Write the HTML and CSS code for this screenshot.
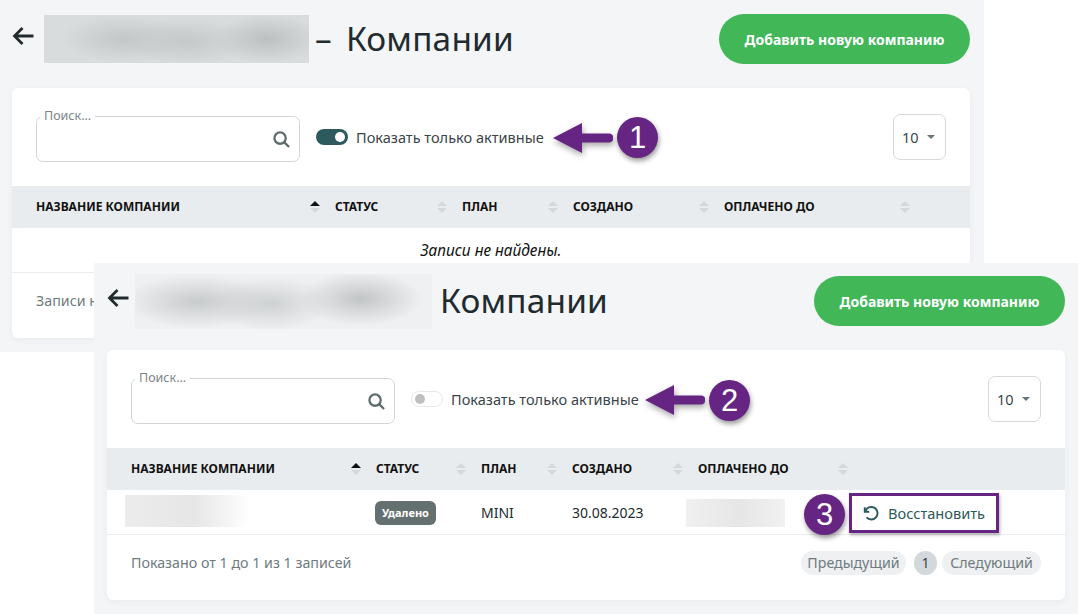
FILE: index.html
```html
<!DOCTYPE html>
<html lang="ru">
<head>
<meta charset="utf-8">
<title>Компании</title>
<link rel="stylesheet" href="styles.css">
</head>
<body>
<div class="canvas">
  <section class="window window-one">
    <header class="page-head">
      <svg class="back" viewBox="0 0 22 20"><path d="M21.500 10H2.500M10.500 2 2.500 10l8 8"/></svg>
      <div class="blur-name"></div>
      <h1 class="title"><span class="dash">–</span>Компании</h1>
      <button class="add">Добавить новую компанию</button>
    </header>
    <div class="card">
      <div class="controls">
        <div class="search">
          <span class="search-label">Поиск...</span>
          <svg class="search-icon" viewBox="0 0 18 18"><circle cx="7.500" cy="7.500" r="6"/><path d="m12 12 5 5"/></svg>
        </div>
        <span class="toggle on"></span>
        <span class="toggle-label">Показать только активные</span>
        <div class="size">10<span class="caret"></span></div>
      </div>
      <table class="grid">
        <colgroup><col class="c1"><col class="c2"><col class="c3"><col class="c4"><col class="c5"><col></colgroup>
        <thead>
          <tr>
            <th class="first"><div class="th"><span>Название компании</span><span class="sort active"></span></div></th>
            <th><div class="th"><span>Статус</span><span class="sort"></span></div></th>
            <th><div class="th"><span>План</span><span class="sort"></span></div></th>
            <th><div class="th"><span>Создано</span><span class="sort"></span></div></th>
            <th><div class="th"><span>Оплачено до</span><span class="sort"></span></div></th>
            <th></th>
          </tr>
        </thead>
        <tbody>
          <tr><td class="empty" colspan="6">Записи не найдены.</td></tr>
        </tbody>
      </table>
      <div class="foot"><span>Записи не найдены</span></div>
    </div>
  </section>

  <section class="window window-two">
    <header class="page-head">
      <svg class="back" viewBox="0 0 22 20"><path d="M21.500 10H2.500M10.500 2 2.500 10l8 8"/></svg>
      <div class="blur-name"></div>
      <h1 class="title">Компании</h1>
      <button class="add">Добавить новую компанию</button>
    </header>
    <div class="card">
      <div class="controls">
        <div class="search">
          <span class="search-label">Поиск...</span>
          <svg class="search-icon" viewBox="0 0 18 18"><circle cx="7.500" cy="7.500" r="6"/><path d="m12 12 5 5"/></svg>
        </div>
        <span class="toggle off"></span>
        <span class="toggle-label">Показать только активные</span>
        <div class="size">10<span class="caret"></span></div>
      </div>
      <table class="grid">
        <colgroup><col class="c1"><col class="c2"><col class="c3"><col class="c4"><col class="c5"><col></colgroup>
        <thead>
          <tr>
            <th class="first"><div class="th"><span>Название компании</span><span class="sort active"></span></div></th>
            <th><div class="th"><span>Статус</span><span class="sort"></span></div></th>
            <th><div class="th"><span>План</span><span class="sort"></span></div></th>
            <th><div class="th"><span>Создано</span><span class="sort"></span></div></th>
            <th><div class="th"><span>Оплачено до</span><span class="sort"></span></div></th>
            <th></th>
          </tr>
        </thead>
        <tbody>
          <tr>
            <td class="first"><div class="blur-company"></div></td>
            <td><span class="badge">Удалено</span></td>
            <td>MINI</td>
            <td>30.08.2023</td>
            <td class="paid"><div class="blur-date"></div></td>
            <td><span class="restore"><svg class="restore-icon" viewBox="0 0 18 18"><path d="M2 2.500v5h5"/><path d="M2.600 7.200A7 7 0 1 1 4 13.800"/></svg>Восстановить</span></td>
          </tr>
        </tbody>
      </table>
      <div class="foot">
        <span>Показано от 1 до 1 из 1 записей</span>
        <nav class="pager">
          <span class="pill prev">Предыдущий</span>
          <span class="pill current">1</span>
          <span class="pill next">Следующий</span>
        </nav>
      </div>
    </div>
  </section>

  <svg class="pointer pointer-one" viewBox="0 0 60 32"><path d="M0 16 29 1v10.500h27a4.500 4.500 0 0 1 0 9H29V31z"/></svg>
  <span class="marker marker-one">1</span>
  <svg class="pointer pointer-two" viewBox="0 0 60 32"><path d="M0 16 29 1v10.500h27a4.500 4.500 0 0 1 0 9H29V31z"/></svg>
  <span class="marker marker-two">2</span>
  <span class="marker marker-three">3</span>
  <div class="highlight"></div>
</div>
</body>
</html>
```
FILE: styles.css
```css
* { box-sizing: border-box; }
html, body { margin: 0; background: #fff; }
body { font-family: "Noto Sans", "Open Sans", sans-serif; font-size: 14px; color: #212b2f; }

.canvas { position: relative; width: 1078px; height: 614px; overflow: hidden; }

.window { position: absolute; width: 984px; background: #f4f5f7; }
.window-one { left: 0; top: 0; height: 352px; padding: 14px 14px 0 12px; }
.window-two { left: 94px; top: 263px; height: 351px; padding: 13px 13px 0 13px; }

.page-head { display: flex; align-items: center; height: 50px; margin-bottom: 24px; }
.back { width: 22px; height: 20px; margin-top: -6px; fill: none; stroke: #212b2f; stroke-width: 2.800; }
.blur-name { flex: none; }
.window-one .blur-name {
  width: 265px; height: 48px; margin-left: 10px;
  background:
    radial-gradient(ellipse 62px 24px at 30% 50%, #c3c7c7, transparent),
    radial-gradient(ellipse 60px 24px at 54% 55%, #c4c8c8, transparent),
    radial-gradient(ellipse 55px 24px at 84% 50%, #bcc0c0, transparent),
    #d9dcdd;
}
.window-two .blur-name {
  width: 297px; height: 55px; margin-left: 6px;
  background:
    radial-gradient(ellipse 75px 27px at 21% 50%, #c8cbcb, transparent),
    radial-gradient(ellipse 60px 27px at 46% 54%, #ced1d1, transparent),
    radial-gradient(ellipse 62px 27px at 76% 45%, #c2c5c5, transparent),
    #eff0f2;
}
.title { margin: 0; font-size: 33.400px; font-weight: 400; line-height: 1; white-space: nowrap; letter-spacing: .2px; }
.window-one .title { margin-left: 6px; }
.window-two .title { margin-left: 8px; }
.dash { margin-right: 14px; }
.add {
  width: 251px; height: 50px; margin-left: auto; border: 0; border-radius: 25px;
  background: #41b758; color: #fff; font: 700 14px "Noto Sans", sans-serif;
}

.card { width: 958px; height: 250px; background: #fff; border-radius: 6px; box-shadow: 0 2px 6px rgba(60, 70, 80, .06); overflow: hidden; }

.controls { display: flex; align-items: center; height: 98px; padding: 0 24px; }
.search { position: relative; width: 264px; height: 46px; margin-top: 4px; border: 1px solid #d0d5d7; border-radius: 7px; }
.search-label { position: absolute; left: 3px; top: -9px; padding: 0 4px; background: #fff; color: #7b8588; font-size: 12.500px; line-height: 16px; }
.search-icon { position: absolute; right: 9px; top: 14px; width: 17px; height: 17px; fill: none; stroke: #5d6c6c; stroke-width: 2.400; }
.toggle { position: relative; width: 32px; height: 16px; margin-left: 16px; border-radius: 8px; }
.toggle::after { content: ""; position: absolute; top: 3px; width: 10px; height: 10px; border-radius: 50%; }
.toggle.on { background: #2d5a5c; }
.toggle.on::after { right: 3px; background: #fff; }
.toggle.off { background: #fff; border: 1px solid #e6e8ea; }
.toggle.off::after { left: 3px; top: 2px; background: #bdbfc1; }
.toggle-label { margin-left: 8px; font-size: 14.550px; color: #3a4548; }
.size {
  display: flex; align-items: center; justify-content: space-between; width: 53px; height: 46px;
  margin-left: auto; padding: 0 10px 0 8px; border: 1px solid #d6dadc; border-radius: 7px; color: #3a4548; font-size: 14.500px;
}
.caret { width: 0; height: 0; border: 4px solid transparent; border-top: 4px solid #68757a; border-bottom: 0; }

.grid { width: 100%; border-collapse: collapse; table-layout: fixed; }
.window-one .c1 { width: 311px; }
.window-one .c2 { width: 127px; }
.window-one .c3 { width: 111px; }
.window-one .c4 { width: 151px; }
.window-one .c5 { width: 201px; }
.window-two .c1 { width: 257px; }
.window-two .c2 { width: 105px; }
.window-two .c3 { width: 91px; }
.window-two .c4 { width: 126px; }
.window-two .c5 { width: 165px; }
.grid th { height: 42px; padding: 0 3px 2px 12px; background: #e9ecee; }
.grid th.first { padding-left: 24px; }
.th { display: flex; align-items: center; justify-content: space-between; color: #111; font-size: 12px; font-weight: 700; text-transform: uppercase; white-space: nowrap; }
.sort { position: relative; width: 10px; height: 10px; top: 1px; }
.sort::before, .sort::after { content: ""; position: absolute; left: 0; border: 5px solid transparent; }
.sort::before { top: -1px; border-top: 0; border-bottom: 5px solid #d3d8da; }
.sort::after { top: 6px; border-bottom: 0; border-top: 5px solid #d3d8da; }
.sort.active::before { border-bottom-color: #111; }

.grid td { height: 44px; padding: 2px 12px 0; border-bottom: 1px solid #e9ecee; font-size: 14px; color: #212b2f; vertical-align: middle; }
.grid td.first { padding-left: 18px; }
.grid td.paid { padding-left: 0; }
.grid td.empty { text-align: center; font-style: italic; color: #111; padding-top: 2px; font-size: 15.400px; }
.blur-company { width: 125px; height: 32px; margin-top: -4px; background: linear-gradient(90deg, #ececec, #e6e6e6 55%, #fff); }
.blur-date { width: 99px; height: 28px; background: linear-gradient(90deg, #f0f0f0, #e7e6e6 55%, #f1f1f1); }
.badge { display: inline-block; height: 24px; margin-left: -1px; padding: 0 7px; border-radius: 6px; background: #646f6f; color: #fff; font-size: 11px; font-weight: 700; line-height: 24px; }
.restore { display: flex; align-items: center; gap: 9px; color: #2d5a5a; font-size: 14.600px; white-space: nowrap; }
.restore-icon { width: 16px; height: 16px; fill: none; stroke: #2d5a5a; stroke-width: 2.200; }

.foot { display: flex; align-items: center; justify-content: space-between; height: 65px; padding: 0 24px 9px; color: #6f7b80; font-size: 14.250px; }
.pager { display: flex; gap: 8px; }
.pill { height: 24px; border-radius: 12px; background: #eef0f1; color: #6f7b80; line-height: 24px; font-size: 14.200px; text-align: center; }
.pill.prev { width: 105px; }
.pill.next { width: 99px; margin-left: -3px; }
.pill.current { width: 23px; background: #d3d9db; color: #3a4548; font-size: 14px; }

.pointer { position: absolute; width: 60px; height: 32px; fill: #662483; filter: drop-shadow(1px 3px 3px rgba(0, 0, 0, .35)); }
.pointer-one { left: 553px; top: 122px; }
.pointer-two { left: 645px; top: 384px; }
.marker {
  position: absolute; width: 41px; height: 41px; border-radius: 50%; background: #662483; color: #fff;
  font: 400 31px/41px "Liberation Sans", sans-serif; text-align: center; box-shadow: 1px 3px 5px rgba(0, 0, 0, .4);
}
.marker-one { left: 617px; top: 117px; }
.marker-two { left: 709px; top: 380px; }
.marker-three { left: 804px; top: 494px; }
.highlight { position: absolute; left: 849px; top: 493px; width: 150px; height: 40px; border: 3px solid #662483; box-shadow: 1px 2px 3px rgba(0, 0, 0, .3); }
```
